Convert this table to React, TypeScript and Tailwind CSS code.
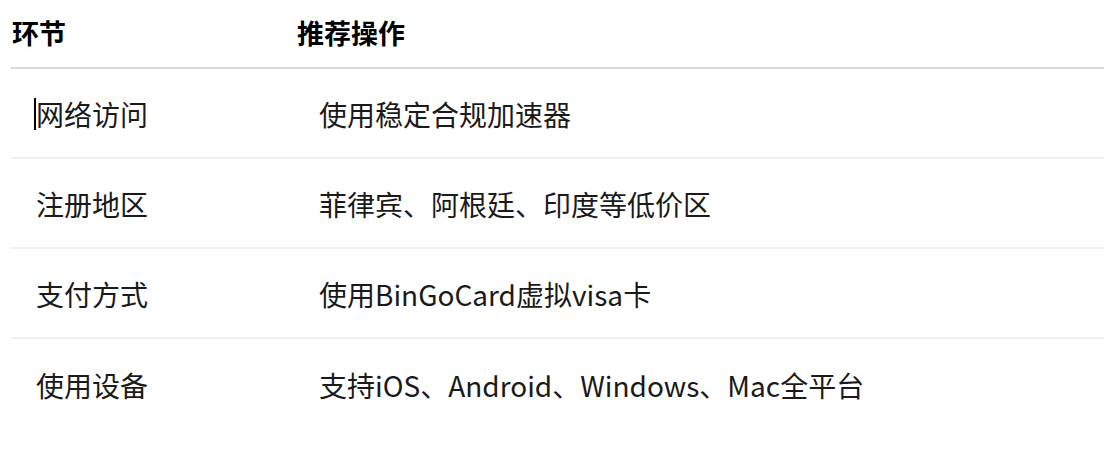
const rows = [
  { step: '网络访问', action: '使用稳定合规加速器' },
  { step: '注册地区', action: '菲律宾、阿根廷、印度等低价区' },
  { step: '支付方式', action: '使用BinGoCard虚拟visa卡' },
  { step: '使用设备', action: '支持iOS、Android、Windows、Mac全平台' },
];

export default function App() {
  return (
    <div
      className="w-[1104px] h-[460px] bg-white pl-[11px] overflow-hidden text-[#1a1a1a]"
      style={{ fontFamily: '"Noto Sans CJK SC", "Noto Sans", sans-serif' }}
    >
      {/* header */}
      <div className="grid grid-cols-[285px_1fr] h-[69px] border-b-2 border-[#d8d8d8] text-[27px] font-bold text-black">
        <div className="flex items-center pl-[1px] pb-[1px]">环节</div>
        <div className="flex items-center pl-[1px] pb-[1px]">推荐操作</div>
      </div>

      {rows.map((r, i) => (
        <div
          key={r.step}
          className={`grid grid-cols-[285px_1fr] h-[90px] text-[28px] ${
            i < rows.length - 1 ? 'border-b-2 border-[#efefef]' : ''
          }`}
        >
          <div className="flex items-center pl-[25px] pt-[2px]">
            <span className={i === 0 ? '-ml-[2px] border-l-2 border-black leading-[32px]' : 'leading-[32px]'}>
              {r.step}
            </span>
          </div>
          <div className="flex items-center pl-[23px] pt-[2px]">{r.action}</div>
        </div>
      ))}
    </div>
  );
}
